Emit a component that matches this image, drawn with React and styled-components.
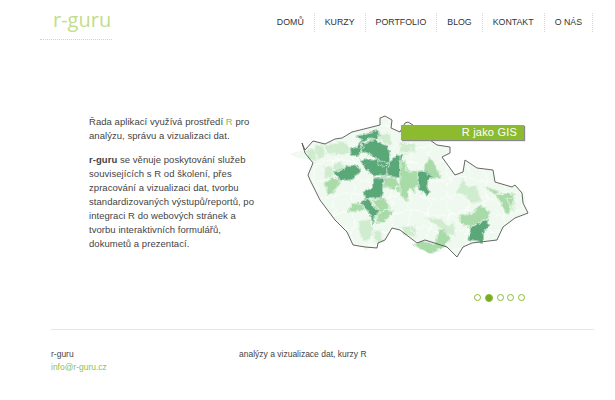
import React from "react";
import styled, { createGlobalStyle } from "styled-components";

const GlobalStyle = createGlobalStyle`
  html, body {
    margin: 0;
    padding: 0;
    background: #fff;
    overflow: hidden;
  }
`;

const Page = styled.div`
  width: 615px;
  height: 400px;
  font-family: "Liberation Sans", Arial, sans-serif;
  font-size: 9.5px;
  color: #444;
`;

const Header = styled.header`
  display: flex;
  justify-content: space-between;
  align-items: flex-start;
  padding: 0 22px 0 40px;
  height: 115px;
`;

const Logo = styled.a`
  display: block;
  box-sizing: border-box;
  width: 72px;
  height: 40px;
  padding: 6px 0 0 13px;
  border-bottom: 1px dotted #c9e08f;
  font-family: "Open Sans", sans-serif;
  font-size: 20px;
  line-height: 27px;
  color: #c2dd8c;
  white-space: nowrap;
`;

const Nav = styled.nav`
  display: flex;
  margin-top: 13px;
`;

const NavItem = styled.a`
  display: block;
  height: 19px;
  padding: 0 10px;
  border-right: 1px dotted #cfe88a;
  font-size: 8.8px;
  line-height: 19px;
  color: #333;
  white-space: nowrap;
`;

const Hero = styled.section`
  display: flex;
  align-items: flex-start;
  padding-left: 89px;
  height: 150px;
`;

const Intro = styled.div`
  width: 174px;
  margin-right: 22px;
  line-height: 14px;
  letter-spacing: 0.05px;

  p {
    margin: 0 0 10px;
  }
`;

const Green = styled.span`
  color: #8fc04a;
`;

const MapBox = styled.div`
  position: relative;
  width: 250px;
  height: 150px;
  flex: none;
`;

const Banner = styled.div`
  position: absolute;
  top: 10px;
  left: 116px;
  width: 123px;
  height: 15px;
  box-sizing: border-box;
  padding-right: 7px;
  background: #8cbb2f;
  box-shadow: 1px 1px 1px #888;
  color: #fff;
  font-size: 11px;
  line-height: 15px;
  letter-spacing: 0.2px;
  text-align: right;
`;

const Dots = styled.div`
  display: flex;
  justify-content: flex-end;
  align-items: center;
  gap: 3.7px;
  height: 9px;
  margin-top: 28px;
  padding-right: 90px;
`;

const Dot = styled.span`
  box-sizing: border-box;
  width: ${(props) => (props.active ? "8px" : "7px")};
  height: ${(props) => (props.active ? "8px" : "7px")};
  border-radius: 50%;
  border: 1px solid #8cbb2f;
  background: ${(props) => (props.active ? "#76ad1e" : "#fff")};
`;

const Footer = styled.footer`
  margin: 27px 21px 0 51px;
  padding-top: 18px;
  border-top: 1px solid #e6e6e6;
  display: flex;
  font-size: 8.5px;
  line-height: 13px;
`;

const FooterCol = styled.div`
  width: 188px;
`;

const OUTLINE = [
  [302, 143], [305, 150], [313, 141], [325, 144], [335, 139], [342, 138], [352, 132], [380, 125],
  [380, 118], [385, 116], [392, 120], [391, 128], [400, 132], [405, 123], [408, 122], [413, 125],
  [415, 133], [430, 140], [437, 145], [450, 147], [450, 153], [442, 157], [455, 175], [463, 172],
  [465, 160], [477, 168], [493, 170], [495, 182], [512, 187], [515, 185], [522, 193], [523, 203],
  [528, 213], [515, 218], [503, 227], [497, 240], [472, 243], [463, 247], [457, 257], [447, 247],
  [425, 240], [417, 243], [400, 230], [392, 228], [385, 240], [378, 243], [377, 248], [365, 247],
  [353, 245], [347, 232], [335, 220], [320, 200], [310, 180], [308, 175], [313, 163], [305, 153],
];

const PALE_EXTRA = [
  "290,154 302,150 310,160 298,158",
  "362,245 372,245 366,251",
  "425,240 447,247 440,252 428,248",
  "515,188 525,192 526,204 520,200",
];

const DARK = "#5aa878";
const MID = "#a9dba9";
const LIGHT = "#cfeccf";

// polygons read off the picture: west half, in 3x crop coordinates
const WEST = [
  [LIGHT, "222,320 255,312 262,345 258,375 235,375 222,345"],
  [LIGHT, "262,350 285,345 295,380 275,380"],
  [LIGHT, "115,155 145,155 140,190 120,190"],
  [LIGHT, "140,155 165,140 180,155 170,165 150,170"],
  [LIGHT, "120,90 180,80 195,110 170,120 125,115"],
  [LIGHT, "90,90 115,90 120,125 100,130 90,115"],
  [LIGHT, "60,105 85,100 95,140 70,130"],
  [LIGHT, "280,55 315,55 320,90 300,85 280,70"],
  [LIGHT, "345,90 390,85 390,110 360,115"],
  [LIGHT, "370,340 390,330 390,365 375,360"],
  [MID, "120,205 145,188 168,198 150,225 130,240"],
  [MID, "295,185 330,190 345,210 325,225 300,215"],
  [MID, "345,150 385,170 390,235 355,205 350,185"],
  [MID, "330,215 360,215 370,255 350,240"],
  [MID, "185,290 205,265 235,270 240,285 215,290"],
  [MID, "258,255 300,250 315,280 285,290"],
  [MID, "275,300 300,285 325,290 295,320 275,322"],
  [DARK, "213,65 275,45 285,60 270,72 245,72 225,88 235,95 218,125 200,120 195,100 215,95 232,75"],
  [DARK, "235,85 270,75 290,85 310,95 315,125 310,150 300,155 280,150 275,125 235,110 225,100"],
  [DARK, "225,135 245,135 280,135 315,150 305,180 270,180 245,165"],
  [DARK, "305,155 335,120 352,125 345,150 350,190 325,185 305,178"],
  [DARK, "145,170 180,160 185,150 220,155 225,175 195,195 170,195 155,185"],
  [DARK, "235,230 262,218 270,190 300,185 295,225 290,248 255,248 240,250"],
  [DARK, "222,265 250,250 258,265 280,290 272,300 265,325 250,290 235,270"],
];

// east half, same idea
const EAST = [
  [LIGHT, "170,230 190,195 205,215 230,215 245,260 215,265 195,240"],
  [LIGHT, "75,310 115,310 150,335 160,320 165,360 150,360 110,330"],
  [LIGHT, "0,335 30,335 45,365 15,360"],
  [LIGHT, "320,250 345,245 340,290"],
  [LIGHT, "0,85 30,85 35,110 0,115"],
  [MID, "0,140 15,135 20,170 50,170 55,210 25,225 20,260 0,235"],
  [MID, "70,170 85,125 105,150 125,190 100,190"],
  [MID, "175,305 205,295 215,300 240,270 270,290 265,310 210,335 190,330"],
  [MID, "40,390 70,380 105,385 115,345 135,340 150,375 130,395 90,415"],
  [MID, "290,240 325,235 345,240 325,300 310,280"],
  [MID, "255,218 300,230 285,238"],
  [DARK, "55,170 75,168 100,185 85,195 80,215 90,230 82,243 60,222 55,205"],
  [DARK, "0,122 8,122 5,135 0,135"],
  [DARK, "205,375 215,335 235,325 265,315 265,335 250,350 250,385 225,375"],
];

// wobbly white district borders over the pale base
const jitter = (a, b) => Math.sin(a * 12.9 + b * 78.2) * 3;
const borderLines = () => {
  const lines = [];
  for (let y = 128; y < 260; y += 17) {
    const row = [];
    for (let x = 290; x <= 530; x += 7) row.push(`${x + jitter(x, y)},${y + jitter(y, x)}`);
    lines.push(row.join(" "));
  }
  for (let x = 296; x < 530; x += 19) {
    const col = [];
    for (let y = 115; y <= 260; y += 7) col.push(`${x + jitter(y, x)},${y + jitter(x, y)}`);
    lines.push(col.join(" "));
  }
  return lines;
};

const Districts = ({ items, originX }) => (
  <g transform={`translate(${originX} 115) scale(0.3333)`}>
    {items.map(([fill, p]) => (
      <polygon key={p} points={p} fill={fill} stroke={fill} strokeWidth="3.5" strokeLinejoin="round" />
    ))}
    {items.map(([fill, p]) => (
      <polygon key={p} points={p} fill="none" stroke="#fff" strokeWidth="1.6" strokeLinejoin="round" />
    ))}
  </g>
);

const CzechMap = () => {
  const outline = OUTLINE.map((p) => p.join(",")).join(" ");
  return (
    <svg width="250" height="150" viewBox="285 115 250 150" style={{ display: "block" }}>
      <defs>
        <filter id="wobble" filterUnits="userSpaceOnUse" x="285" y="115" width="250" height="150">
          <feTurbulence type="fractalNoise" baseFrequency="0.22" numOctaves="2" seed="4" />
          <feDisplacementMap in="SourceGraphic" scale="5" xChannelSelector="R" yChannelSelector="G" />
        </filter>
      </defs>
      <polygon points={outline} fill="#eff9ef" />
      {PALE_EXTRA.map((p) => (
        <polygon key={p} points={p} fill="#eff9ef" />
      ))}
      <g filter="url(#wobble)">
        {borderLines().map((l) => (
          <polyline key={l} points={l} fill="none" stroke="#fff" strokeWidth="0.7" />
        ))}
        <Districts items={WEST} originX={285} />
        <Districts items={EAST} originX={400} />
      </g>
      <polygon points={outline} fill="none" stroke="#555" strokeWidth="0.9" />
    </svg>
  );
};

const NAV_ITEMS = ["DOMŮ", "KURZY", "PORTFOLIO", "BLOG", "KONTAKT", "O NÁS"];

export default function App() {
  return (
    <Page>
      <GlobalStyle />
      <Header>
        <Logo>r-guru</Logo>
        <Nav>
          {NAV_ITEMS.map((item) => (
            <NavItem key={item}>{item}</NavItem>
          ))}
        </Nav>
      </Header>
      <Hero>
        <Intro>
          <p>
            Řada aplikací využívá prostředí <Green>R</Green> pro analýzu, správu a vizualizaci dat.
          </p>
          <p>
            <b>r-guru</b> se věnuje poskytování služeb souvisejících s R od školení, přes zpracování a
            vizualizaci dat, tvorbu standardizovaných výstupů/reportů, po integraci R do webových
            stránek a tvorbu interaktivních formulářů, dokumetů a prezentací.
          </p>
        </Intro>
        <MapBox>
          <CzechMap />
          <Banner>R jako GIS</Banner>
        </MapBox>
      </Hero>
      <Dots>
        {[0, 1, 2, 3, 4].map((i) => (
          <Dot key={i} active={i === 1} />
        ))}
      </Dots>
      <Footer>
        <FooterCol>
          r-guru
          <br />
          <Green>info@r-guru.cz</Green>
        </FooterCol>
        <div>analýzy a vizualizace dat, kurzy R</div>
      </Footer>
    </Page>
  );
}
